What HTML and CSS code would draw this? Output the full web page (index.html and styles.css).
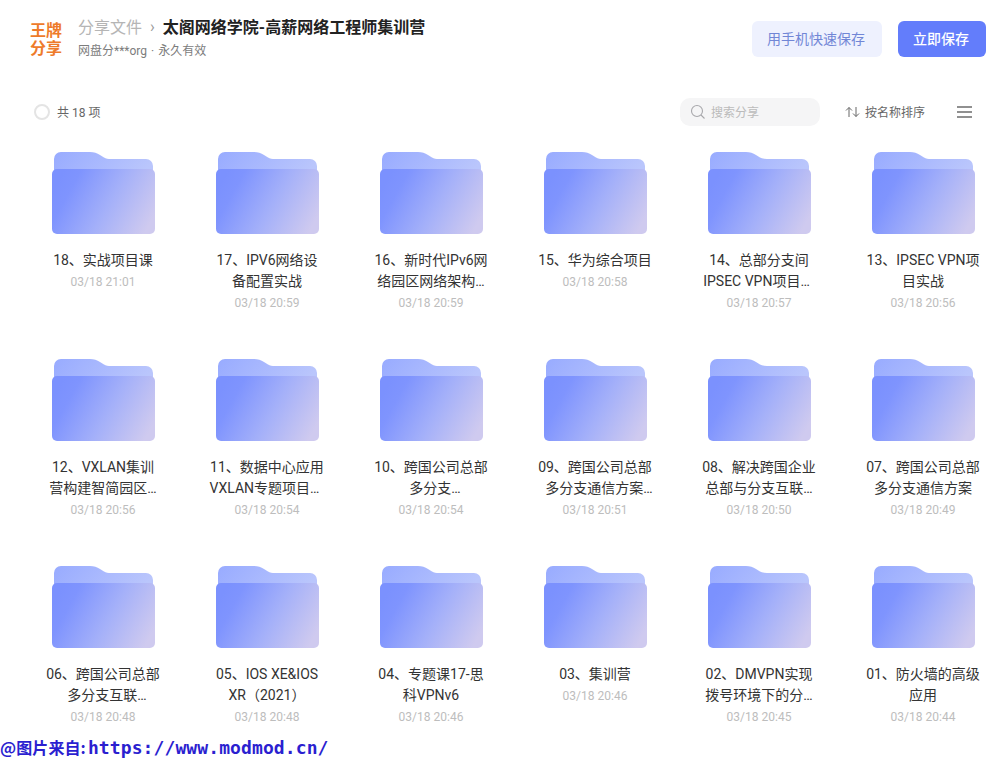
FILE: index.html
```html
<!DOCTYPE html>
<html>
<head>
    <title>分享文件</title>
    <link rel="stylesheet" href="styles.css">
</head>
<body>
    <svg class="defs" width="0" height="0">
        <defs>
            <linearGradient id="folderBack" x1="0" y1="0" x2="1" y2="0.3">
                <stop offset="0" stop-color="#98abff"/>
                <stop offset="1" stop-color="#bac6fc"/>
            </linearGradient>
            <linearGradient id="folderFront" x1="0" y1="0.35" x2="1" y2="0.7">
                <stop offset="0" stop-color="#7b91fe"/>
                <stop offset="0.15" stop-color="#7f94fe"/>
                <stop offset="0.55" stop-color="#a4b0f9"/>
                <stop offset="1" stop-color="#cfcaef"/>
            </linearGradient>
            <linearGradient id="folderEdge" x1="0" y1="0" x2="1" y2="0">
                <stop offset="0" stop-color="#b4c1fd"/>
                <stop offset="0.5" stop-color="#d6ddfe"/>
                <stop offset="1" stop-color="#c3cbfa"/>
            </linearGradient>
            <symbol id="folder" viewBox="0 0 103 83">
                <path d="M2 8a7 7 0 0 1 7-7h29c4 0 7 1 10 3l4 2.500c2 1 4 1.500 7 1.500h35a7 7 0 0 1 7 7v20H2z" fill="url(#folderBack)"/>
                <path d="M0 23a5 5 0 0 1 5-5h93a5 5 0 0 1 5 5v55a5 5 0 0 1-5 5H5a5 5 0 0 1-5-5z" fill="url(#folderFront)"/>
                <path d="M2 18.500h99" stroke="url(#folderEdge)" stroke-width="1"/>
            </symbol>
        </defs>
    </svg>

    <header class="top">
        <div class="logo">王牌<br>分享</div>
        <div class="info">
            <div class="crumb">
                <span class="crumb-link">分享文件</span>
                <span class="crumb-sep">›</span>
                <span class="crumb-title">太阁网络学院-高薪网络工程师集训营</span>
            </div>
            <div class="sub">网盘分***org · 永久有效</div>
        </div>
        <button class="btn btn-light">用手机快速保存</button>
        <button class="btn btn-main">立即保存</button>
    </header>

    <div class="toolbar">
        <span class="check"></span>
        <span class="count">共 18 项</span>
        <div class="search">
            <svg width="16" height="16" viewBox="0 0 16 16" fill="none" stroke="#a8a8ac" stroke-width="1.100">
                <circle cx="7" cy="7" r="5.500"/>
                <path d="M11 11l3.500 3.500"/>
            </svg>
            <span>搜索分享</span>
        </div>
        <div class="sort">
            <svg width="15" height="12" viewBox="0 0 15 12" fill="none" stroke="#666" stroke-width="1">
                <path d="M4 11V1.500M1 4.500l3-3 3 3M11 1v9.500M8 7.500l3 3 3-3"/>
            </svg>
            <span>按名称排序</span>
        </div>
        <div class="menu"><i></i><i></i><i></i></div>
    </div>

    <main class="grid">
        <div class="item"><svg class="folder"><use href="#folder"/></svg><div class="name">18、实战项目课</div><div class="time">03/18 21:01</div></div>
        <div class="item"><svg class="folder"><use href="#folder"/></svg><div class="name">17、IPV6网络设<br>备配置实战</div><div class="time">03/18 20:59</div></div>
        <div class="item"><svg class="folder"><use href="#folder"/></svg><div class="name">16、新时代IPv6网<br>络园区网络架构…</div><div class="time">03/18 20:59</div></div>
        <div class="item"><svg class="folder"><use href="#folder"/></svg><div class="name">15、华为综合项目</div><div class="time">03/18 20:58</div></div>
        <div class="item"><svg class="folder"><use href="#folder"/></svg><div class="name">14、总部分支间<br><span class="cut-left">IPSEC VPN项目…</span></div><div class="time">03/18 20:57</div></div>
        <div class="item"><svg class="folder"><use href="#folder"/></svg><div class="name">13、IPSEC VPN项<br>目实战</div><div class="time">03/18 20:56</div></div>

        <div class="item"><svg class="folder"><use href="#folder"/></svg><div class="name">12、VXLAN集训<br>营构建智简园区…</div><div class="time">03/18 20:56</div></div>
        <div class="item"><svg class="folder"><use href="#folder"/></svg><div class="name">11、数据中心应用<br><span class="cut-left">VXLAN专题项目…</span></div><div class="time">03/18 20:54</div></div>
        <div class="item"><svg class="folder"><use href="#folder"/></svg><div class="name">10、跨国公司总部<br><span class="cut-right">多分支…</span></div><div class="time">03/18 20:54</div></div>
        <div class="item"><svg class="folder"><use href="#folder"/></svg><div class="name">09、跨国公司总部<br><span class="cut-right">多分支通信方案…</span></div><div class="time">03/18 20:51</div></div>
        <div class="item"><svg class="folder"><use href="#folder"/></svg><div class="name">08、解决跨国企业<br>总部与分支互联…</div><div class="time">03/18 20:50</div></div>
        <div class="item"><svg class="folder"><use href="#folder"/></svg><div class="name">07、跨国公司总部<br>多分支通信方案</div><div class="time">03/18 20:49</div></div>

        <div class="item"><svg class="folder"><use href="#folder"/></svg><div class="name">06、跨国公司总部<br><span class="cut-right">多分支互联…</span></div><div class="time">03/18 20:48</div></div>
        <div class="item"><svg class="folder"><use href="#folder"/></svg><div class="name">05、IOS XE&amp;IOS<br>XR（2021）</div><div class="time">03/18 20:48</div></div>
        <div class="item"><svg class="folder"><use href="#folder"/></svg><div class="name">04、专题课17-思<br>科VPNv6</div><div class="time">03/18 20:46</div></div>
        <div class="item"><svg class="folder"><use href="#folder"/></svg><div class="name">03、集训营</div><div class="time">03/18 20:46</div></div>
        <div class="item"><svg class="folder"><use href="#folder"/></svg><div class="name">02、DMVPN实现<br>拨号环境下的分…</div><div class="time">03/18 20:45</div></div>
        <div class="item"><svg class="folder"><use href="#folder"/></svg><div class="name">01、防火墙的高级<br>应用</div><div class="time">03/18 20:44</div></div>
    </main>

    <div class="watermark"><span class="watermark-label">@图片来自:</span>https://www.modmod.cn/</div>
</body>
</html>
```

FILE: styles.css
```css
html, body {
    height: 100%;
}
body {
    margin: 0;
    overflow: hidden;
    position: relative;
    background: #fff;
    color: #333;
    font-family: Roboto, "Noto Sans CJK SC", sans-serif;
}
.defs {
    position: absolute;
}
.top {
    display: flex;
    align-items: flex-start;
    padding: 21px 17px 0 30px;
    height: 78px;
    box-sizing: border-box;
}
.logo {
    width: 32px;
    margin-top: 1px;
    font-size: 16px;
    line-height: 18px;
    font-weight: 700;
    color: #ee7b2a;
    text-align: center;
}
.info {
    flex: 1;
    margin: -2px 0 0 16px;
}
.crumb {
    display: flex;
    align-items: center;
    height: 14px;
    font-size: 16px;
}
.crumb-link {
    color: #b5b5b5;
}
.crumb-sep {
    margin: 0 8px;
    color: #999;
}
.crumb-title {
    font-weight: 700;
    color: #222;
}
.sub {
    margin-top: 10px;
    font-size: 12px;
    line-height: 16px;
    word-spacing: 1px;
    color: #7c7c7c;
}
.btn {
    height: 36px;
    padding: 0 2px 2px 0;
    border: 0;
    border-radius: 6px;
    font-family: inherit;
    font-size: 14px;
}
.btn-light {
    width: 130px;
    background: #eef1fe;
    color: #7186d6;
}
.btn-main {
    width: 88px;
    margin-left: 16px;
    background: #637dfb;
    color: #fff;
    font-weight: 500;
}
.toolbar {
    display: flex;
    align-items: center;
    height: 28px;
    margin-top: 20px;
    padding: 0 31px 0 34px;
    font-size: 12px;
    color: #666;
}
.check {
    width: 12px;
    height: 12px;
    border: 2px solid #e4e4e4;
    border-radius: 50%;
}
.count {
    flex: 1;
    margin-left: 7px;
    padding-bottom: 2px;
}
.search {
    display: flex;
    align-items: center;
    gap: 5px;
    width: 140px;
    height: 28px;
    padding-left: 10px;
    box-sizing: border-box;
    border-radius: 10px;
    background: #f5f5f6;
    color: #bbb;
}
.search span, .sort span {
    padding-bottom: 2px;
}
.sort {
    display: flex;
    align-items: center;
    gap: 5px;
    margin-left: 25px;
}
.menu {
    display: flex;
    flex-direction: column;
    gap: 3px;
    margin-left: 32px;
}
.menu i {
    width: 15px;
    height: 2px;
    background: #909090;
}
.grid {
    display: grid;
    grid-template-columns: repeat(6, 164px);
    grid-auto-rows: 207px;
    padding: 25px 0 0 21px;
}
.item {
    display: flex;
    flex-direction: column;
    align-items: center;
    text-align: center;
}
.folder {
    width: 103px;
    height: 83px;
    margin-bottom: 16px;
}
.name {
    font-size: 14px;
    line-height: 21px;
    color: #333;
}
/* the clamped lines do not sit quite centred */
.cut-left {
    padding-right: 5px;
}
.cut-right {
    padding-left: 8px;
}
.time {
    margin-top: 3px;
    font-size: 12px;
    line-height: 16px;
    color: #bdbdbd;
}
.watermark {
    position: absolute;
    left: 0;
    top: 737px;
    font-family: "DejaVu Sans Mono", monospace;
    font-size: 18px;
    line-height: 20px;
    font-weight: 700;
    letter-spacing: 0.1px;
    color: #2b1fd0;
    white-space: nowrap;
}
.watermark-label {
    margin-right: 2px;
    font-family: "Noto Sans CJK SC", sans-serif;
    font-size: 16px;
}
```
